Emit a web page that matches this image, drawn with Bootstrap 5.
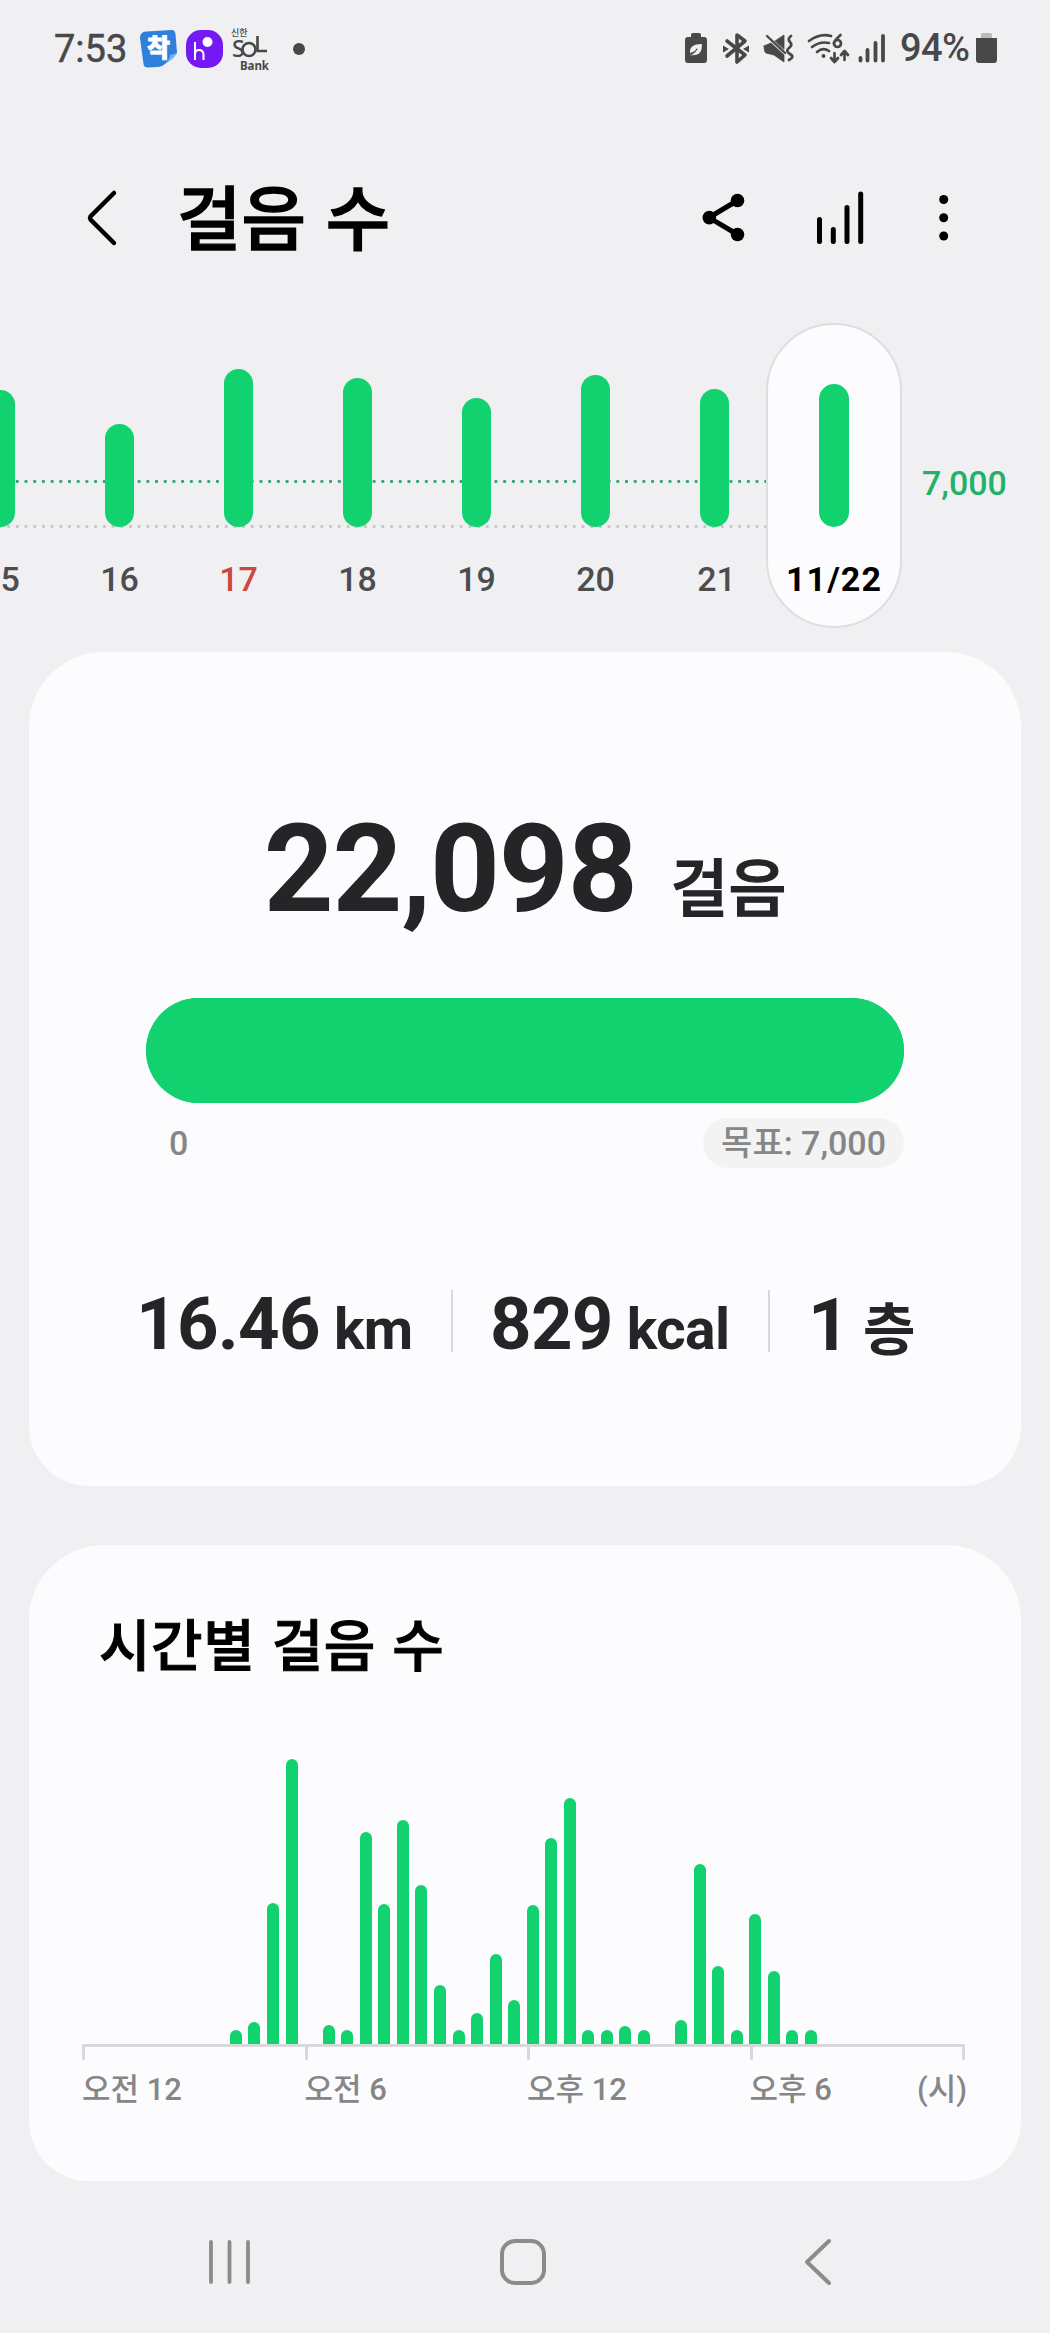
<!DOCTYPE html>
<html lang="ko">
<head>
<meta charset="utf-8">
<meta name="viewport" content="width=device-width, initial-scale=1">
<title>걸음 수</title>
<link href="https://cdn.jsdelivr.net/npm/bootstrap@5.3.0/dist/css/bootstrap.min.css" rel="stylesheet">
<style>
  body { background:#f0f0f2; color:#000; font-family:Roboto,"Noto Sans CJK KR",sans-serif; font-weight:500; line-height:1; width:1050px; height:2333px; overflow:hidden; }
  svg { display:block; flex:none; overflow:visible; }
  .kr { font-family:"Noto Sans CJK KR",sans-serif; }
  .status { height:98px; padding:0 53px 0 54px; color:#484848; font-size:38px; }
  .status-time { width:86px; letter-spacing:0; font-weight:400; -webkit-text-stroke:.5px; }
  .appbar { height:240px; padding:0 80px 0 84px; }
  .appbar h1 { font-size:70px; letter-spacing:.1px; font-weight:500; -webkit-text-stroke:1.4px #000; margin:-6px 0 0 57px; line-height:80px; }
  .strip { height:329px; margin-top:-15px; }
  .days { margin-left:-59px; height:305px; background:
      radial-gradient(circle,#35a377 1.3px,transparent 1.9px) 2.300px 154px/8.71px 9px repeat-x,
      radial-gradient(circle,#c9c5c7 1.3px,transparent 1.9px) 2.300px 199px/8.71px 9px repeat-x; }
  .day { width:119px; height:305px; padding-bottom:101px; font-size:34px; color:#4d4d50; }
  .day-bar { width:29.3px; flex:none; background:#12d16f; }
  .day-label { height:0; line-height:34px; margin-top:35px; margin-bottom:-35px; white-space:nowrap; letter-spacing:0; }
  .day-today { width:136px; margin:0 -8px; background:#fcfcfe; border:2px solid #dedee0; border-radius:68px; padding-bottom:99px; color:#000; }
  .day-today .day-label { font-weight:700; font-size:34px; letter-spacing:1.1px; }
  .sunday { color:#d0463f; }
  .goal-line { font-size:34px; color:#22b169; margin-left:28px; padding-top:143px; }
  .panel { background:#fcfcfe; border:0; border-radius:75px 75px 60px 60px; margin:0 29px; }
  .panel-total { height:834px; color:#252527; }
  .total { height:346px; padding-top:156px; }
  .total-num { font-size:122px; font-weight:700; letter-spacing:-1.2px; line-height:123px; }
  .total-unit { font-size:63px; font-weight:500; -webkit-text-stroke:1.2px #252527; letter-spacing:0; line-height:80px; margin-left:34px; }
  .goal-bar { height:105px; margin:0 117px; border-radius:53px; background:#12d16f; --bs-progress-bar-bg:#12d16f; }
  .goal-scale { height:50px; margin:15px 117px 0 140px; font-size:34px; color:#868686; }
  .goal-pill { height:50px; border-radius:25px; background:#f3f3f3; padding:0 18px; }
  .stats { height:62px; margin:122px 0 0; padding-left:107px; }
  .stats > div { padding-top:4px; height:62px; }
  .stats b { font-size:72.5px; line-height:62px; font-weight:700; letter-spacing:-.7px; }
  .stats small { font-size:57px; line-height:62px; font-weight:700; letter-spacing:-.6px; margin-left:14px; }
  .rule { width:2px; height:62px; background:#d8d8da; }
  .panel-hourly { height:636px; margin-top:59px; }
  .panel-hourly h2 { font-size:56px; line-height:70px; margin:62px 0 0 70px; font-weight:500; -webkit-text-stroke:1px #000; letter-spacing:.6px; }
  .hours { height:290px; margin:77px 0 0 49.3px; }
  .hour { width:18.55px; flex:none; }
  .hour i { display:block; width:12px; margin:0 auto; background:#12d16f; border-radius:6px 6px 0 0; }
  .axis { height:16px; margin:0 56px 0 53px; border-top:3px solid #d9d9db; border-right:3px solid #d9d9db; }
  .axis span { width:222.5px; flex:none; border-left:3px solid #d9d9db; }
  .axis span:last-child { flex:0 1 auto; min-width:0; width:100px; }
  .axis-labels { margin:12px 54px 0 53px; font-size:31px; line-height:36px; color:#868686; }
  .axis-labels span { width:222.5px; white-space:nowrap; }
  .sysnav { height:152px; padding:9px 219px 0 209px; }
  .nav-home { margin-left:-8px; }
</style>
</head>
<body>
<div class="status d-flex align-items-center">
  <span class="status-time">7:53</span>
  <svg width="38" height="38" viewBox="0 0 38 38"><path d="M6 1.500 32 0q3 0 3.500 4L37 23 25 34Q22 37 17 37L8 37.500Q4 37.500 3.500 34L0 8Q0 2 6 1.500Z" fill="#2f7fdd"/><path d="M37 23Q34 29 25 34 30 29 30 25Z" fill="#76b5f2"/><text x="18.500" y="27" font-size="25" font-weight="900" fill="#fff" stroke="#fff" stroke-width=".8" text-anchor="middle" font-family="Noto Sans CJK KR">착</text></svg>
  <svg class="ms-2" width="37" height="38" viewBox="0 0 37 38"><rect width="37" height="38" rx="15" fill="#7418f4"/><path d="M9 12V30M9 24Q9 20 13 20T17.500 24V30" fill="none" stroke="#fff" stroke-width="2"/><circle cx="21.500" cy="12" r="5" fill="#fff"/></svg>
  <svg class="ms-2" width="39" height="44" viewBox="0 0 39 44" fill="#484848" font-family="Noto Sans CJK KR"><text x="0" y="9" font-size="9" font-weight="500">신한</text><text x="1" y="30" font-size="23" font-weight="500" font-family="Noto Sans">S</text><circle cx="18" cy="22.500" r="6.500" fill="none" stroke="#484848" stroke-width="2.600"/><path d="M26.500 9V24H36" fill="none" stroke="#484848" stroke-width="2.600"/><text x="9" y="43" font-size="11.500" font-weight="700" font-family="Noto Sans" textLength="29">Bank</text></svg>
  <svg width="12" height="12" viewBox="0 0 12 12" style="margin-left:23px"><circle cx="6" cy="6" r="6" fill="#484848"/></svg>
  <div class="d-flex align-items-center ms-auto">
    <svg width="312" height="34" viewBox="685 32 312 34" fill="#484848" stroke-linecap="round" stroke-linejoin="round">
      <path d="M691 37V35q0-2 2-2h6q2 0 2 2v2h3q3 0 3 3v20q0 3-3 3H688q-3 0-3-3V40q0-3 3-3Z"/>
      <path d="M690 53q-1-9 12-9 0 12-8 11l-5 1 6-5" fill="#f0f0f2"/><path d="M688 56Q693 55 697 49" fill="none" stroke="#484848" stroke-width="1.200"/>
      <path d="M727 41 745 55 737 62V35L745 41 727 56" fill="none" stroke="#484848" stroke-width="3.600"/><path d="M723 45.500l6 3.500-6 3.500ZM749 45.500l-6 3.500 6 3.500Z"/>
      <path d="M764 46 771 43 784 55V62L774 55 766 53Q764 52 764 46ZM775 41 784 35V49Z" stroke="#484848" stroke-width=".8"/><path d="M767 36 785 53" fill="none" stroke="#484848" stroke-width="2.400"/><path d="M791 36q-4 3-1 6t-1 6 1 6-1 6" fill="none" stroke="#484848" stroke-width="2.800"/>
      <g fill="none" stroke="#484848" stroke-width="2.700"><path d="M809 41Q820 33 831 36M812 47Q820 41 829 43M817 52Q823 47 829 51M840.500 35Q833 42 834 44M834.500 53V61M831 58l3.500 4 3.500-4M844.500 60V52M841 55l3.500-4 3.500 4"/><circle cx="837.500" cy="43.500" r="3.500"/></g><circle cx="823.500" cy="56" r="2"/>
      <path d="M860.500 58V60.500M867.500 50V60.500M875.500 43V60.500M883 36V60.500" stroke="#484848" stroke-width="3.800" fill="none"/>
      <text x="900" y="61" font-size="38" font-family="Roboto" font-weight="500" textLength="70">94%</text>
      <rect x="981" y="33" width="11" height="8" rx="2" fill="#bababc"/><path d="M976 38H997V60q0 3-3 3H979q-3 0-3-3Z"/>
    </svg>
  </div>
</div>
<header class="appbar d-flex align-items-center">
  <svg width="36" height="54" viewBox="84 191 36 54"><path d="M114 193 90.500 216.500Q89.500 218 90.500 219.500L114 243" fill="none" stroke="#000" stroke-width="4.500" stroke-linecap="round"/></svg>
  <h1 class="kr">걸음 수</h1>
  <svg class="ms-auto" width="268" height="56" viewBox="702 190 268 56"><g fill="none" stroke="#000" stroke-width="5"><path d="M737.500 200.500 709 217.600 737.500 234.500"/><path d="M819.500 219.500V241.500M833.300 229.500V241.500M847 207.500V241.500M860.700 194V241.500" stroke-linecap="round"/></g><circle cx="709.300" cy="217.600" r="6.800"/><circle cx="737.500" cy="200.500" r="6.800"/><circle cx="737.500" cy="234.500" r="6.800"/><circle cx="943.700" cy="199.500" r="4.500"/><circle cx="943.700" cy="217.800" r="4.500"/><circle cx="943.700" cy="236" r="4.500"/></svg>
</header>
<section class="strip d-flex align-items-start">
  <div class="days d-flex">
    <div class="day d-flex flex-column align-items-center justify-content-end"><div class="day-bar rounded-pill" style="height:137px"></div><span class="day-label">15</span></div>
    <div class="day d-flex flex-column align-items-center justify-content-end"><div class="day-bar rounded-pill" style="height:103px"></div><span class="day-label">16</span></div>
    <div class="day d-flex flex-column align-items-center justify-content-end"><div class="day-bar rounded-pill" style="height:158px"></div><span class="day-label sunday">17</span></div>
    <div class="day d-flex flex-column align-items-center justify-content-end"><div class="day-bar rounded-pill" style="height:149px"></div><span class="day-label">18</span></div>
    <div class="day d-flex flex-column align-items-center justify-content-end"><div class="day-bar rounded-pill" style="height:129px"></div><span class="day-label">19</span></div>
    <div class="day d-flex flex-column align-items-center justify-content-end"><div class="day-bar rounded-pill" style="height:152px"></div><span class="day-label">20</span></div>
    <div class="day d-flex flex-column align-items-center justify-content-end"><div class="day-bar rounded-pill" style="height:138px"></div><span class="day-label ps-1">21</span></div>
    <div class="day day-today d-flex flex-column align-items-center justify-content-end"><div class="day-bar rounded-pill" style="height:143px"></div><span class="day-label">11/22</span></div>
  </div>
  <span class="goal-line">7,000</span>
</section>
<main>
  <section class="card panel panel-total">
    <div class="total d-flex justify-content-center align-items-baseline"><span class="total-num">22,098</span><span class="total-unit kr">걸음</span></div>
    <div class="progress goal-bar"><div class="progress-bar" style="width:100%"></div></div>
    <div class="goal-scale d-flex justify-content-between align-items-center"><span>0</span><span class="goal-pill d-flex align-items-center">목표: 7,000</span></div>
    <div class="stats d-flex">
      <div class="d-flex align-items-baseline" style="width:315px"><b>16.46</b><small>km</small></div><span class="rule"></span>
      <div class="d-flex align-items-baseline" style="width:315px;padding-left:37px"><b>829</b><small>kcal</small></div><span class="rule"></span>
      <div class="d-flex align-items-baseline" style="padding-left:38px"><b>1</b><small class="kr">층</small></div>
    </div>
  </section>
  <section class="card panel panel-hourly">
    <h2 class="kr">시간별 걸음 수</h2>
    <div class="hours d-flex align-items-end" id="hours"></div>
    <div class="axis d-flex"><span></span><span></span><span></span><span></span></div>
    <div class="axis-labels d-flex"><span>오전 12</span><span>오전 6</span><span>오후 12</span><span style="width:auto">오후 6</span><span class="ms-auto" style="width:auto">(시)</span></div>
  </section>
</main>
<nav class="sysnav d-flex align-items-center justify-content-between">
  <svg width="41" height="46" viewBox="0 0 41 46"><path d="M2 3V43M20.500 3V43M39 3V43" stroke="#8b8b8b" stroke-width="3.800" stroke-linecap="round"/></svg>
  <svg class="nav-home" width="46" height="46" viewBox="0 0 46 46"><rect x="2" y="2" width="42" height="42" rx="13" fill="none" stroke="#8b8b8b" stroke-width="4"/></svg>
  <svg width="27" height="46" viewBox="0 0 27 46"><path d="M25 2 3 23 25 44" fill="none" stroke="#8b8b8b" stroke-width="4" stroke-linecap="round" stroke-linejoin="round"/></svg>
</nav>
<script src="https://cdn.jsdelivr.net/npm/bootstrap@5.3.0/dist/js/bootstrap.bundle.min.js"></script>
<script>
  // Half-hour step counts as bar heights
  const steps = [0,0,0,0,0,0,0,0,14.5,22.5,141,285.5,0,19.5,14.5,212.5,140,224.5,159.5,59.5,14.5,31,90,44.5,139.5,206.5,246.5,14.5,14.5,18.5,14.5,0,24.5,180.500,78,14.5,130,73.5,14.5,14.5];
  document.getElementById('hours').innerHTML = steps.map(h => `<div class="hour"><i style="height:${h}px"></i></div>`).join('');
</script>
</body>
</html>
